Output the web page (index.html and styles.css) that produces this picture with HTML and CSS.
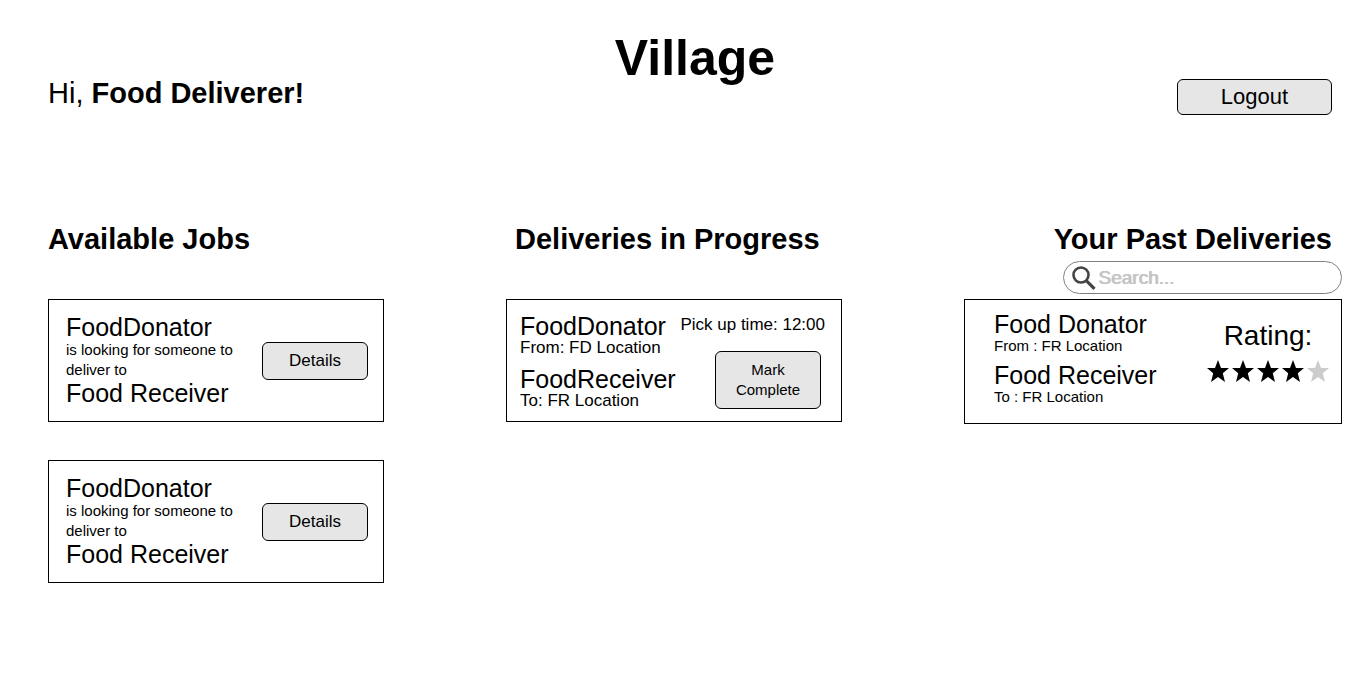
FILE: index.html
```html
<!DOCTYPE html>
<html lang="en">
<head>
<meta charset="utf-8">
<meta name="viewport" content="width=device-width, initial-scale=1">
<title>Village</title>
<link rel="stylesheet" href="styles.css">
</head>
<body>
<header class="header">
  <p class="greeting">Hi, <strong>Food Deliverer!</strong></p>
  <h1 class="title">Village</h1>
  <button class="button logout" type="button">Logout</button>
</header>
<main class="columns">
  <section class="column">
    <h2 class="heading">Available Jobs</h2>
    <div class="cards">
      <article class="card job">
        <div class="job-text">
          <h3 class="name">FoodDonator</h3>
          <p class="job-note">is looking for someone to deliver to</p>
          <h3 class="name">Food Receiver</h3>
        </div>
        <button class="button details" type="button">Details</button>
      </article>
      <article class="card job">
        <div class="job-text">
          <h3 class="name">FoodDonator</h3>
          <p class="job-note">is looking for someone to deliver to</p>
          <h3 class="name">Food Receiver</h3>
        </div>
        <button class="button details" type="button">Details</button>
      </article>
    </div>
  </section>
  <section class="column">
    <h2 class="heading heading-progress">Deliveries in Progress</h2>
    <div class="cards">
      <article class="card delivery">
        <div class="stops">
          <div>
            <h3 class="name">FoodDonator</h3>
            <p class="place">From: FD Location</p>
          </div>
          <div>
            <h3 class="name">FoodReceiver</h3>
            <p class="place">To: FR Location</p>
          </div>
        </div>
        <div class="pickup">
          <p class="place">Pick up time: 12:00</p>
          <button class="button complete" type="button">Mark Complete</button>
        </div>
      </article>
    </div>
  </section>
  <section class="column">
    <h2 class="heading heading-past">Your Past Deliveries</h2>
    <label class="search">
      <svg class="search-icon" viewBox="0 0 24 24" aria-hidden="true">
        <circle cx="9" cy="9" r="7.5" fill="none" stroke="#444" stroke-width="2.6"/>
        <path d="M14 14.3L22.5 22.8" stroke="#444" stroke-width="3.2"/>
      </svg>
      <input class="search-input" type="search" placeholder="Search..." aria-label="Search past deliveries">
    </label>
    <article class="card past">
      <div class="stops past-stops">
        <div>
          <h3 class="name">Food Donator</h3>
          <p class="past-place">From : FR Location</p>
        </div>
        <div>
          <h3 class="name">Food Receiver</h3>
          <p class="past-place">To : FR Location</p>
        </div>
      </div>
      <div class="rating">
        <p class="rating-label">Rating:</p>
        <div class="stars" role="img" aria-label="4 out of 5 stars">
          <svg class="star" viewBox="0 0 22 22"><path d="M11 0L14 8H22L15.8 13.3L18 22L11 17L4 22L6.2 13.3L0 8H8Z"/></svg>
          <svg class="star" viewBox="0 0 22 22"><path d="M11 0L14 8H22L15.8 13.3L18 22L11 17L4 22L6.2 13.3L0 8H8Z"/></svg>
          <svg class="star" viewBox="0 0 22 22"><path d="M11 0L14 8H22L15.8 13.3L18 22L11 17L4 22L6.2 13.3L0 8H8Z"/></svg>
          <svg class="star" viewBox="0 0 22 22"><path d="M11 0L14 8H22L15.8 13.3L18 22L11 17L4 22L6.2 13.3L0 8H8Z"/></svg>
          <svg class="star star-empty" viewBox="0 0 22 22"><path d="M11 0L14 8H22L15.8 13.3L18 22L11 17L4 22L6.2 13.3L0 8H8Z"/></svg>
        </div>
      </div>
    </article>
  </section>
</main>
</body>
</html>
```
FILE: styles.css
```css
* {
  box-sizing: border-box;
}

body {
  margin: 0;
  padding: 30px 28px 30px 48px;
  background: #fff;
  color: #000;
  font-family: "Liberation Sans", Arial, Helvetica, sans-serif;
}

h1, h2, h3, p {
  margin: 0;
}

.header {
  display: grid;
  grid-template-columns: 1fr auto 1fr;
  align-items: start;
}

.greeting {
  padding-top: 47px;
  font-size: 29px;
  line-height: 32px;
}

.title {
  font-size: 50px;
  line-height: 56px;
}

.button {
  border: 1px solid #000;
  border-radius: 6px;
  background: #e6e6e6;
  color: #000;
  font-family: inherit;
  cursor: pointer;
}

.logout {
  justify-self: end;
  width: 155px;
  margin: 49px 10px 0 0;
  padding: 3px;
  font-size: 22px;
  line-height: 28px;
}

.columns {
  display: grid;
  grid-template-columns: 336fr 336fr 378fr;
  gap: 122px;
  align-items: start;
  margin-top: 108px;
}

.heading {
  font-size: 29px;
  line-height: 32px;
  white-space: nowrap;
}

.heading-progress {
  padding-left: 9px;
}

.heading-past {
  padding-right: 10px;
  text-align: right;
}

.cards {
  display: grid;
  gap: 38px;
  margin-top: 44px;
}

.card {
  display: flex;
  justify-content: space-between;
  border: 1px solid #000;
}

.name {
  font-size: 25px;
  font-weight: 400;
  line-height: 26px;
}

.job {
  align-items: center;
  padding: 14px 15px 15px 17px;
}

.job-text {
  width: 176px;
}

.job-note {
  font-size: 15px;
  line-height: 20px;
}

.details {
  width: 106px;
  margin-top: 2px;
  padding: 7px;
  font-size: 17px;
  line-height: 22px;
}

.delivery {
  padding: 13px 16px 11px 13px;
}

.stops {
  display: grid;
  gap: 9px;
  white-space: nowrap;
}

.place {
  font-size: 17px;
  line-height: 18px;
}

.pickup {
  display: flex;
  flex-direction: column;
  align-items: flex-end;
  gap: 17px;
  padding-top: 3px;
}

.complete {
  width: 106px;
  margin-right: 4px;
  padding: 8px;
  font-size: 15px;
  line-height: 20px;
}

.search {
  display: flex;
  align-items: center;
  gap: 2px;
  width: 279px;
  height: 33px;
  margin: 6px 0 5px auto;
  padding: 0 16px 0 8px;
  border: 1px solid #808080;
  border-radius: 17px;
}

.search-icon {
  flex: none;
  width: 24px;
  height: 24px;
}

.search-input {
  flex: 1;
  min-width: 0;
  padding: 0;
  border: 0;
  outline: 0;
  background: none;
  color: #000;
  font-family: inherit;
  font-size: 19px;
  line-height: 24px;
}

.search-input::placeholder {
  color: #c4c4c4;
  text-shadow: 1px 0 #c4c4c4;
}

.past {
  padding: 11px 12px 17px 29px;
}

.past-stops {
  gap: 7px;
}

.past-place {
  font-size: 15px;
  line-height: 18px;
}

.rating {
  display: flex;
  flex-direction: column;
  align-items: center;
  gap: 8px;
  padding-top: 9px;
}

.rating-label {
  font-size: 28px;
  line-height: 32px;
}

.stars {
  display: flex;
  gap: 3px;
}

.star {
  width: 22px;
  height: 22px;
}

.star-empty {
  fill: #ccc;
}
```
